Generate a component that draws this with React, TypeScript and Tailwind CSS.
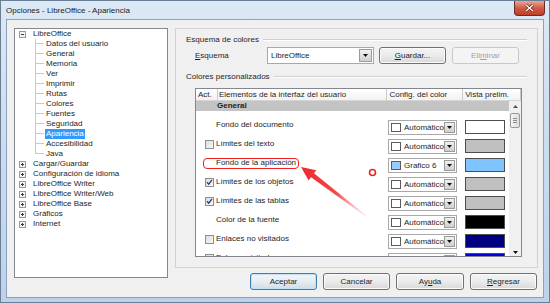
import React from "react";

const treeChildren = [
  "Datos del usuario",
  "General",
  "Memoria",
  "Ver",
  "Imprimir",
  "Rutas",
  "Colores",
  "Fuentes",
  "Seguridad",
  "Apariencia",
  "Accesibilidad",
  "Java",
];

const treeRoots = [
  "Cargar/Guardar",
  "Configuración de idioma",
  "LibreOffice Writer",
  "LibreOffice Writer/Web",
  "LibreOffice Base",
  "Gráficos",
  "Internet",
];

type Row = {
  label: string;
  check: boolean | null;
  swatch: string;
  name: string;
  preview: string;
};

const rows: Row[] = [
  { label: "Fondo del documento", check: null, swatch: "#ffffff", name: "Automático", preview: "#ffffff" },
  { label: "Límites del texto", check: false, swatch: "#ffffff", name: "Automático", preview: "#c0c0c0" },
  { label: "Fondo de la aplicación", check: null, swatch: "#99ccff", name: "Grafico 6", preview: "#80c4ff" },
  { label: "Límites de los objetos", check: true, swatch: "#ffffff", name: "Automático", preview: "#c0c0c0" },
  { label: "Límites de las tablas", check: true, swatch: "#ffffff", name: "Automático", preview: "#c0c0c0" },
  { label: "Color de la fuente", check: null, swatch: "#ffffff", name: "Automático", preview: "#000000" },
  { label: "Enlaces no visitados", check: false, swatch: "#ffffff", name: "Automático", preview: "#000080" },
  { label: "Enlaces visitados", check: false, swatch: "#ffffff", name: "Automático", preview: "#0000e0" },
];

function Expander({ open }: { open: boolean }) {
  return (
    <svg width="7" height="7" viewBox="0 0 7 7" className="shrink-0">
      <rect x="0.5" y="0.5" width="6" height="6" fill="#f4f4f4" stroke="#9a9a9a" />
      <path d="M2 3.5h3" stroke="#3b3b3b" />
      {!open && <path d="M3.5 2v3" stroke="#3b3b3b" />}
    </svg>
  );
}

function DropArrow() {
  return (
    <svg width="5" height="3" viewBox="0 0 5 3">
      <path d="M0 0h5L2.5 3z" fill="#111" />
    </svg>
  );
}

function CheckBox({ checked }: { checked: boolean }) {
  return (
    <svg width="9" height="9" viewBox="0 0 9 9" className="shrink-0">
      <defs>
        <linearGradient id="cbg" x1="0" y1="0" x2="1" y2="1">
          <stop offset="0" stopColor="#dcdcdc" />
          <stop offset="1" stopColor="#f8f8f8" />
        </linearGradient>
      </defs>
      <rect x="0.5" y="0.5" width="8" height="8" fill="url(#cbg)" stroke="#8e8f8f" />
      {checked && <path d="M2 4.3l1.7 1.9L7 1.8" fill="none" stroke="#2c3f7a" strokeWidth="1.3" />}
    </svg>
  );
}

function Tree() {
  return (
    <div className="h-[250px] w-[154px] border border-[#828790] bg-white text-[#1e1e1e]">
      <div className="flex h-[10px] items-center pl-[4px]">
        <Expander open />
        <span className="ml-[7px]">LibreOffice</span>
      </div>
      {treeChildren.map((c, i) => (
        <div key={c} className="flex h-[10px] items-stretch pl-[20px]">
          <span className="flex w-[9px] flex-col">
            <span className="h-[5px] border-b border-l border-[#c9c9c9]" />
            <span className={i === treeChildren.length - 1 ? "h-[5px]" : "h-[5px] border-l border-[#c9c9c9]"} />
          </span>
          {c === "Apariencia" ? (
            <span className="ml-[1px] flex items-center bg-[#3399ff] px-[1px] text-white">{c}</span>
          ) : (
            <span className="ml-[2px] flex items-center">{c}</span>
          )}
        </div>
      ))}
      {treeRoots.map((r) => (
        <div key={r} className="flex h-[10px] items-center pl-[4px]">
          <Expander open={false} />
          <span className="ml-[7px]">{r}</span>
        </div>
      ))}
    </div>
  );
}

function WinButton({ children, primary, disabled, w }: { children: React.ReactNode; primary?: boolean; disabled?: boolean; w: string }) {
  const base = "flex h-[17px] items-center justify-center rounded-[3px] border ";
  const look = disabled
    ? "border-[#c8c8c8] bg-[#f4f4f4] text-[#a0a0a0]"
    : primary
      ? "border-[#3c7fb1] bg-gradient-to-b from-[#f2f6f9] via-[#e6edf2] to-[#d4dde4] text-[#1e1e1e] shadow-[inset_0_0_0_1px_#bfe2f7]"
      : "border-[#707070] bg-gradient-to-b from-[#f4f4f4] via-[#ebebeb] to-[#d8d8d8] text-[#1e1e1e] shadow-[inset_0_0_0_1px_#fbfbfb]";
  return <div className={base + look + " " + w}>{children}</div>;
}

function FixedLine({ label }: { label: string }) {
  return (
    <div className="flex h-[10px] items-center pl-[10px] pr-[10px]">
      <span className="text-[#1e1e1e]">{label}</span>
      <span className="ml-[4px] h-[2px] flex-1 border-t border-b border-t-[#d0d0d0] border-b-white" />
    </div>
  );
}

function ColorCombo({ swatch, name }: { swatch: string; name: string }) {
  return (
    <div className="flex h-[15px] w-[69px] items-center border border-[#a9a9a9] bg-white">
      <span className="ml-[2px] h-[9px] w-[10px] shrink-0 border border-[#5c5c5c]" style={{ backgroundColor: swatch }} />
      <span className="ml-[3px] flex-1 overflow-hidden whitespace-nowrap text-[#1e1e1e]">{name}</span>
      <span className="mr-[1px] flex h-[11px] w-[11px] shrink-0 items-center justify-center border border-[#9a9a9a] bg-gradient-to-b from-[#f0f0f0] to-[#cfcfcf]">
        <DropArrow />
      </span>
    </div>
  );
}

function ColorTable() {
  return (
    <div className="ml-[19px] mt-[6px] h-[169px] w-[327px] overflow-hidden border border-[#828790] bg-white text-[#1e1e1e]">
      <div className="flex h-[12px] border-b border-[#d5d5d5] bg-gradient-to-b from-white to-[#f2f2f2]">
        <span className="flex w-[22px] items-center border-r border-[#c9c9c9] pl-[2px]">Act.</span>
        <span className="flex w-[170px] items-center border-r border-[#c9c9c9] pl-[1px]">Elementos de la interfaz del usuario</span>
        <span className="flex w-[76px] items-center border-r border-[#c9c9c9] pl-[2px]">Config. del color</span>
        <span className="flex w-[58px] items-center border-r border-[#c9c9c9] pl-[2px]">Vista prelim.</span>
      </div>
      <div className="flex">
        <div className="w-[314px]">
          <div className="flex h-[10px] items-center bg-[#c4c4c4] pl-[21px] font-bold">General</div>
          <div className="pt-[7px]">
            {rows.map((r) => (
              <div key={r.label} className="flex h-[19px] items-start">
                <div className="mt-[2px] flex h-[10px] w-[192px] items-center pl-[9px]">
                  {r.check === null ? <span className="w-[9px]" /> : <CheckBox checked={r.check} />}
                  <span className="ml-[2px] whitespace-nowrap">{r.label}</span>
                </div>
                <div className="mt-[2px]">
                  <ColorCombo swatch={r.swatch} name={r.name} />
                </div>
                <div className="ml-[8px] mt-[2px] h-[14px] w-[40px] border border-[#4d4d4d]" style={{ backgroundColor: r.preview }} />
              </div>
            ))}
          </div>
        </div>
        <div className="flex h-[156px] w-[12px] flex-col items-center bg-[#f0f0f0]">
          <div className="flex h-[10px] items-center">
            <svg width="5" height="3" viewBox="0 0 5 3">
              <path d="M0 3h5L2.5 0z" fill="#555" />
            </svg>
          </div>
          <div className="mt-[2px] flex h-[15px] w-[10px] flex-col items-center justify-center gap-[1px] rounded-[2px] border border-[#9a9a9a] bg-gradient-to-r from-[#f4f4f4] to-[#dedede]">
            <span className="h-px w-[4px] bg-[#8a8a8a]" />
            <span className="h-px w-[4px] bg-[#8a8a8a]" />
            <span className="h-px w-[4px] bg-[#8a8a8a]" />
          </div>
          <div className="flex-1" />
          <div className="flex h-[10px] items-center">
            <DropArrow />
          </div>
        </div>
      </div>
    </div>
  );
}

function Annotations() {
  return (
    <>
      <div className="absolute left-[202px] top-[157px] h-[11px] w-[96px] rounded-[4px] border-[1.5px] border-[#f02020]" />
      <svg className="absolute left-0 top-0" width="550" height="303" viewBox="0 0 550 303">
        <defs>
          <linearGradient id="arw" x1="300" y1="166" x2="365" y2="215" gradientUnits="userSpaceOnUse">
            <stop offset="0" stopColor="#f0282c" />
            <stop offset="0.55" stopColor="#f24a4e" />
            <stop offset="1" stopColor="#f7b8ba" stopOpacity="0.3" />
          </linearGradient>
        </defs>
        <polygon
          points="300,166 315.3,169.2 313,172.2 365.3,214.6 364.7,215.4 310,176.2 307.6,179.4"
          fill="url(#arw)"
        />
        <circle cx="371.5" cy="171.5" r="3" fill="none" stroke="#ee2222" strokeWidth="1.6" />
      </svg>
    </>
  );
}

export default function App() {
  return (
    <div className="relative h-[303px] w-[550px] overflow-hidden border border-[#6a7f96] bg-gradient-to-b from-[#dce9f6] via-[#cadcef] to-[#bdd2ea] font-['Liberation_Sans',Arial,sans-serif] text-[8px] leading-[10px]">
      <div className="flex h-[18px] items-start">
        <span className="ml-[5px] mt-[5px] text-[#1b1b1b]">Opciones - LibreOffice - Apariencia</span>
        <div className="ml-auto mr-[4px] flex h-[15px] w-[31px] items-center justify-center rounded-b-[4px] border border-t-0 border-[#6e2b20] bg-gradient-to-b from-[#e9a696] via-[#d05a45] to-[#c13e27]">
          <svg width="9" height="8" viewBox="0 0 9 8">
            <path d="M1 1l7 6M8 1L1 7" stroke="#5a1a10" strokeWidth="2.6" />
            <path d="M1 1l7 6M8 1L1 7" stroke="#ffffff" strokeWidth="1.4" />
          </svg>
        </div>
      </div>
      <div className="mx-[5px] h-[279px] border border-[#8da1b8] bg-[#f0f0f0]">
        <div className="flex pl-[7px] pt-[8px]">
          <Tree />
          <div className="ml-[7px] flex w-[363px] flex-col">
            <div className="flex h-[240px] flex-col border border-[#d2d2d2] pt-[6px]">
              <FixedLine label="Esquema de colores" />
              <div className="mt-[2px] flex h-[17px] items-center">
                <span className="ml-[19px] w-[72px] text-[#1e1e1e]">
                  <span className="underline">E</span>squema
                </span>
                <div className="flex h-[17px] w-[107px] items-center border border-[#a9a9a9] bg-white">
                  <span className="ml-[3px] flex-1 text-[#1e1e1e]">LibreOffice</span>
                  <span className="mr-[1px] flex h-[13px] w-[13px] items-center justify-center border border-[#9a9a9a] bg-gradient-to-b from-[#f0f0f0] to-[#cfcfcf]">
                    <DropArrow />
                  </span>
                </div>
                <div className="ml-[5px]">
                  <WinButton w="w-[67px]">
                    <span>
                      <span className="underline">G</span>uardar...
                    </span>
                  </WinButton>
                </div>
                <div className="ml-[6px]">
                  <WinButton w="w-[67px]" disabled>
                    <span>
                      Eli<span className="underline">m</span>inar
                    </span>
                  </WinButton>
                </div>
              </div>
              <div className="mt-[8px]">
                <FixedLine label="Colores personalizados" />
              </div>
              <ColorTable />
            </div>
            <div className="mt-[5px] flex justify-end gap-[6px] pr-[1px]">
              <WinButton w="w-[67px]" primary>
                Aceptar
              </WinButton>
              <WinButton w="w-[67px]">Cancelar</WinButton>
              <WinButton w="w-[68px]">
                <span>
                  Ay<span className="underline">u</span>da
                </span>
              </WinButton>
              <WinButton w="w-[67px]">
                <span>
                  <span className="underline">R</span>egresar
                </span>
              </WinButton>
            </div>
          </div>
        </div>
      </div>
      <Annotations />
    </div>
  );
}
